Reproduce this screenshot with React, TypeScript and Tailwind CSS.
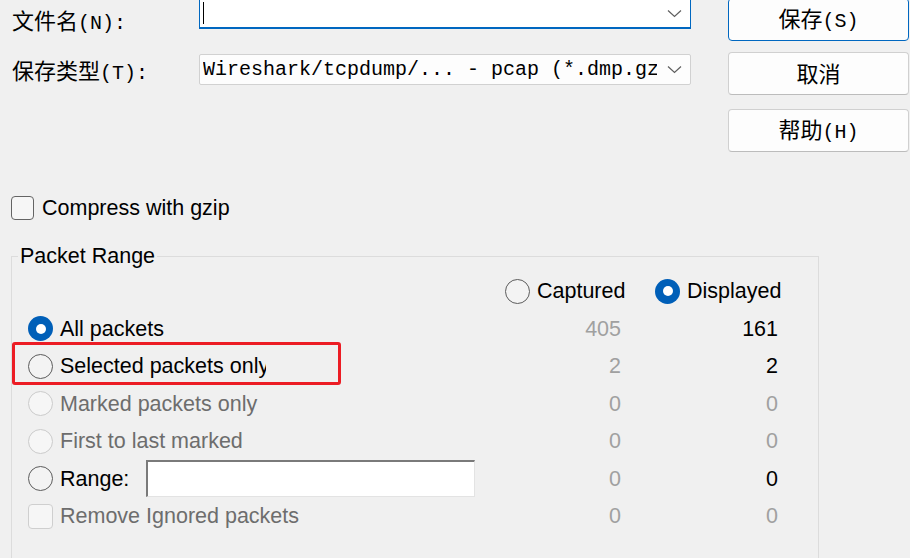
import type { ReactNode } from 'react';

type RadioState = 'on' | 'off' | 'disabled';

function Zh({ text }: { text: string }) {
  const parts = text.split(/([\u4e00-\u9fff]+)/).filter(Boolean);
  return (
    <>
      {parts.map((p, i) =>
        /[\u4e00-\u9fff]/.test(p) ? (
          <span key={i} className="font-['Noto_Sans_CJK_SC',sans-serif] text-[22px]">
            {p}
          </span>
        ) : (
          <span key={i} className="font-['Liberation_Mono','Noto_Sans_CJK_SC',monospace] text-[20px]">
            {p}
          </span>
        )
      )}
    </>
  );
}

function Chevron() {
  return (
    <svg width="15" height="9" viewBox="0 0 15 9" className="shrink-0">
      <polyline points="1,1.5 7.5,7.5 14,1.5" fill="none" stroke="#5f5f5f" strokeWidth="1.2" />
    </svg>
  );
}

function Radio({ state }: { state: RadioState }) {
  if (state === 'on') {
    return (
      <span className="flex h-[25px] w-[25px] shrink-0 items-center justify-center rounded-full bg-[#005fb8]">
        <span className="h-[10px] w-[10px] rounded-full bg-white" />
      </span>
    );
  }
  if (state === 'disabled') {
    return <span className="h-[25px] w-[25px] shrink-0 rounded-full border border-[#cbcbcb] bg-[#f6f6f6]" />;
  }
  return <span className="h-[25px] w-[25px] shrink-0 rounded-full border border-[#5c5c5c] bg-[#f3f3f3]" />;
}

function Button({ label, primary, className }: { label: string; primary?: boolean; className: string }) {
  return (
    <div
      className={
        'flex h-[43px] w-[181px] items-center justify-center rounded-[4px] bg-[#fdfdfd] text-black ' +
        (primary ? 'border border-[#0067c0] ' : 'border border-[#d0d0d0] border-b-[#bcbcbc] ') +
        className
      }
    >
      <span className="leading-[26px]">
        <Zh text={label} />
      </span>
    </div>
  );
}

const rows: {
  label: string;
  radio?: RadioState;
  check?: boolean;
  cap: string;
  disp: string;
  dark?: boolean;
  disabled?: boolean;
  extra?: ReactNode;
}[] = [
  { label: 'All packets', radio: 'on', cap: '405', disp: '161', dark: true },
  { label: 'Selected packets only', radio: 'off', cap: '2', disp: '2', dark: true },
  { label: 'Marked packets only', radio: 'disabled', cap: '0', disp: '0', disabled: true },
  { label: 'First to last marked', radio: 'disabled', cap: '0', disp: '0', disabled: true },
  {
    label: 'Range:',
    radio: 'off',
    cap: '0',
    disp: '0',
    dark: true,
    extra: (
      <div className="ml-[10px] h-[37px] w-[329px] border-t-2 border-l-2 border-r border-b border-t-[#7a7a7a] border-l-[#7a7a7a] border-r-[#e3e3e3] border-b-[#e3e3e3] bg-white" />
    ),
  },
  { label: 'Remove Ignored packets', check: true, cap: '0', disp: '0', disabled: true },
];

export default function App() {
  return (
    <div className="relative h-[558px] w-[910px] overflow-hidden bg-[#f0f0f0] font-['Liberation_Sans',Arial,sans-serif] text-[21.5px] text-black">
      {/* top: file name / type + buttons */}
      <div className="-mt-[2px] flex items-start">
        <div className="flex w-[691px] flex-col">
          <div className="flex h-[31px] items-start">
            <div className="mt-[8px] w-[199px] shrink-0 pl-[12px] leading-[26px]">
              <Zh text="文件名(N):" />
            </div>
            <div className="flex h-[31px] w-[492px] items-center border border-b-2 border-[#0067c0] bg-white pl-[3px] pr-[8px]">
              <span className="h-[22px] w-px bg-black" />
              <span className="ml-auto">
                <Chevron />
              </span>
            </div>
          </div>
          <div className="mt-[25px] flex h-[31px] items-start">
            <div className="mt-[2px] w-[199px] shrink-0 pl-[12px] leading-[26px]">
              <Zh text="保存类型(T):" />
            </div>
            <div className="flex h-[31px] w-[492px] items-center rounded-[2px] border border-[#d1d1d1] bg-[#fdfdfd] pl-[3px] pr-[8px]">
              <div className="w-[454px] overflow-hidden whitespace-nowrap font-['Liberation_Mono',monospace] text-[20px] leading-[26px]">
                Wireshark/tcpdump/... - pcap (*.dmp.gz)
              </div>
              <span className="ml-auto">
                <Chevron />
              </span>
            </div>
          </div>
        </div>
        <div className="ml-[37px] flex flex-col">
          <Button label="保存(S)" primary className="" />
          <Button label="取消" className="mt-[11px]" />
          <Button label="帮助(H)" className="mt-[14px]" />
        </div>
      </div>

      {/* compress */}
      <div className="ml-[11px] mt-[43px] flex items-center gap-[8px]">
        <span className="h-[24px] w-[23px] rounded-[4px] border border-[#646464] bg-[#f6f6f6]" />
        <span className="leading-[26px]">Compress with gzip</span>
      </div>

      {/* packet range */}
      <fieldset className="ml-[11px] mt-[22px] h-[400px] w-[808px] border border-[#dcdcdc] pt-[3.5px]">
        <legend className="ml-[6px] px-[2px] leading-[26px]">Packet Range</legend>
        <div className="grid grid-cols-[477px_150px_150px] auto-rows-[37.5px] pl-[16px]">
          <div />
          <div className="flex items-center gap-[7px]">
            <Radio state="off" />
            <span className="leading-[26px]">Captured</span>
          </div>
          <div className="flex items-center gap-[7px]">
            <Radio state="on" />
            <span className="leading-[26px]">Displayed</span>
          </div>

          {rows.map((r) => (
            <div key={r.label} className="contents">
              <div className="flex items-center gap-[7px]">
                {r.check ? (
                  <span className="h-[25px] w-[25px] shrink-0 rounded-[4px] border border-[#cfcfcf] bg-[#f6f6f6]" />
                ) : (
                  <Radio state={r.radio!} />
                )}
                <span
                  className={
                    'whitespace-nowrap leading-[26px] ' +
                    (r.disabled ? 'text-[#6d6d6d] ' : 'text-black ') +
                    (r.label === 'Selected packets only' ? 'max-w-[206px] overflow-hidden' : '')
                  }
                >
                  {r.label}
                </span>
                {r.extra}
              </div>
              <div className="flex items-center justify-end pr-[34px] leading-[26px] text-[#a0a0a0]">{r.cap}</div>
              <div
                className={
                  'flex items-center justify-end pr-[27px] leading-[26px] ' + (r.dark ? 'text-black' : 'text-[#a0a0a0]')
                }
              >
                {r.disp}
              </div>
            </div>
          ))}
        </div>
      </fieldset>

      {/* annotation */}
      <div className="absolute left-[12px] top-[342px] h-[43px] w-[329px] rounded-[3px] border-[3px] border-[#ec1c24]" />
    </div>
  );
}
